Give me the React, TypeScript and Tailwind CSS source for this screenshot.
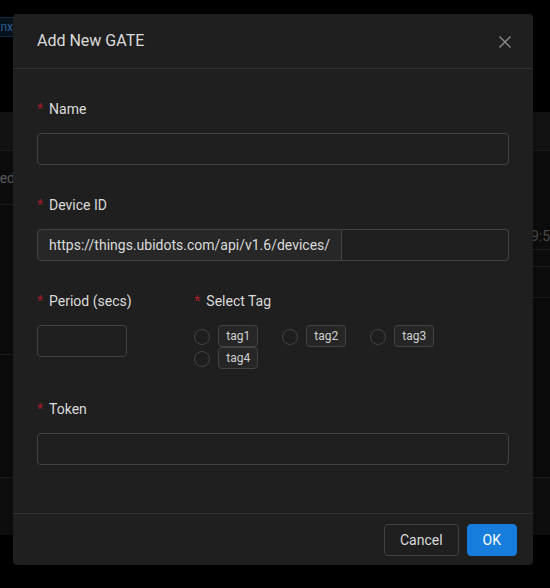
import { useState } from "react";

const tags = ["tag1", "tag2", "tag3", "tag4"];

function Label({ text }: { text: string }) {
  return (
    <div className="h-[22px] leading-[22px] mb-[13px] text-sm text-[#dbdbdb] flex items-center">
      <span className="text-[#a61d24] mr-[6px] text-sm">*</span>
      {text}
    </div>
  );
}

export default function App() {
  const [picked, setPicked] = useState<string | null>(null);

  return (
    <div className="relative w-[550px] h-[588px] bg-black overflow-hidden font-['Roboto',sans-serif]">
      {/* page behind the overlay */}
      <div className="flex h-full">
        <div className="w-[13px] flex flex-col">
          <div className="h-[17px]" />
          <div className="h-[20px] flex justify-end overflow-hidden">
            <span className="mr-[-8px] px-[7px] h-[20px] leading-[18px] text-xs whitespace-nowrap border border-[#112b44] bg-[#08121d] text-[#2a5f93]">
              nginx
            </span>
          </div>
          <div className="h-[75px]" />
          <div className="h-[39px] bg-[#131313] border-b border-[#1c1c1c]" />
          <div className="h-[54px] bg-[#0d0d0d] border-b border-[#1c1c1c] flex items-center justify-end overflow-hidden">
            <span className="text-sm text-[#5a5a5a] whitespace-nowrap mr-[-2px]">Finished</span>
          </div>
          <div className="h-[150px] bg-[#0b0b0b] border-b border-[#1c1c1c]" />
          <div className="h-[123px] bg-[#0b0b0b] border-b border-[#1c1c1c]" />
          <div className="h-[57px] bg-[#0e0e0e]" />
        </div>
        <div className="flex-1" />
        <div className="w-[17px] flex flex-col">
          <div className="h-[112px]" />
          <div className="h-[39px] bg-[#131313] border-b border-[#1c1c1c]" />
          <div className="h-[99px] bg-[#0d0d0d] border-b border-[#1c1c1c] flex items-end overflow-hidden">
            <span className="text-sm text-[#4a4a4a] whitespace-nowrap ml-[-2px] mb-[3px]">9:56</span>
          </div>
          <div className="h-[17px] bg-[#0d0d0d] border-b border-[#1c1c1c]" />
          <div className="h-[31px] bg-[#0d0d0d] border-b border-[#1c1c1c]" />
          <div className="h-[180px] bg-[#0b0b0b] border-b border-[#1c1c1c]" />
          <div className="h-[57px] bg-[#0e0e0e]" />
        </div>
      </div>

      {/* Modal */}
      <div className="absolute left-[13px] top-[14px] w-[520px] bg-[#1f1f1f] rounded-sm shadow-xl">
        <div className="h-[55px] pl-6 pr-[22px] flex items-center justify-between border-b border-[#303030]">
          <span className="text-base text-[#dbdbdb]">Add New GATE</span>
          <svg width="12" height="12" viewBox="0 0 12 12" className="mt-[2px]">
            <path d="M0.5 0.5 L11.5 11.5 M11.5 0.5 L0.5 11.5" stroke="#8c8c8c" strokeWidth="1.3" fill="none" />
          </svg>
        </div>

        <div className="px-6 pt-[29px] pb-[48px]">
          <div className="mb-[29px]">
            <Label text="Name" />
            <input className="w-full h-8 bg-transparent border border-[#434343] rounded-sm px-[11px] text-sm text-[#dbdbdb] outline-none" />
          </div>

          <div className="mb-[29px]">
            <Label text="Device ID" />
            <div className="flex h-8">
              <div className="px-[11px] flex items-center bg-[#272727] border border-[#434343] rounded-l-sm text-sm text-[#dbdbdb] whitespace-nowrap">
                https://things.ubidots.com/api/v1.6/devices/
              </div>
              <input className="flex-1 min-w-0 bg-transparent border border-l-0 border-[#434343] rounded-r-sm px-[11px] text-sm text-[#dbdbdb] outline-none" />
            </div>
          </div>

          <div className="grid grid-cols-3 mb-[29px]">
            <div>
              <Label text="Period (secs)" />
              <input className="w-[90px] h-8 bg-transparent border border-[#434343] rounded-sm px-[11px] text-sm text-[#dbdbdb] outline-none" />
            </div>
            <div className="col-span-2">
              <Label text="Select Tag" />
              <div className="flex flex-wrap">
                {tags.map((t) => (
                  <label key={t} onClick={() => setPicked(t)} className="flex items-center gap-2 mr-6 h-[22px] cursor-pointer">
                    <span className={`w-4 h-4 mt-[2px] rounded-full border ${picked === t ? "border-[#177ddc] border-[5px]" : "border-[#434343]"}`} />
                    <span className="h-[22px] px-[7px] leading-[20px] text-xs border border-[#434343] rounded-sm bg-[#262626] text-[#d0d0d0]">
                      {t}
                    </span>
                  </label>
                ))}
              </div>
            </div>
          </div>

          <div>
            <Label text="Token" />
            <input className="w-full h-8 bg-transparent border border-[#434343] rounded-sm px-[11px] text-sm text-[#dbdbdb] outline-none" />
          </div>
        </div>

        <div className="border-t border-[#303030] pt-[10px] pb-[9px] pr-4 flex justify-end gap-2">
          <button className="h-8 px-[15px] border border-[#434343] rounded-sm text-sm text-[#dbdbdb]">Cancel</button>
          <button className="h-8 px-[15px] border border-[#177ddc] bg-[#177ddc] rounded-sm text-sm text-white">OK</button>
        </div>
      </div>
    </div>
  );
}
